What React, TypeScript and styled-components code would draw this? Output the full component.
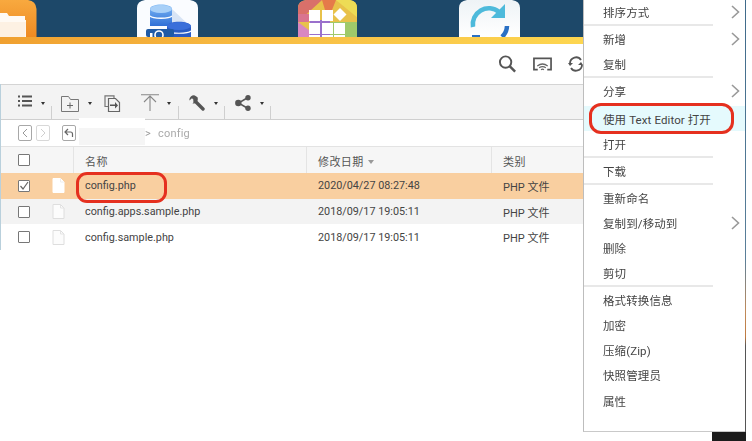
import React from "react";
import styled, { createGlobalStyle } from "styled-components";

const Global = createGlobalStyle`
  html, body { margin: 0; padding: 0; background: #fff; }
  body { font-family: Roboto, "Noto Sans CJK SC", "Liberation Sans", sans-serif; color: #444; overflow: hidden; }
  #root { width: 752px; height: 441px; overflow: hidden; }
`;

const Stage = styled.div`
  position: relative;
  width: 746px;
  height: 441px;
  display: flex;
  align-items: flex-start;
  overflow: hidden;
  filter: blur(0.4px);
`;

const Main = styled.div`
  width: 583px;
  flex: none;
  display: flex;
  flex-direction: column;
  overflow: hidden;
`;

const Dock = styled.div`
  height: 37px;
  position: relative;
  background: #1d4869;
  overflow: hidden;
  display: flex;
`;

const DockSlot = styled.div<{ $w: number; $gap: number }>`
  width: ${(p) => p.$w}px;
  margin-left: ${(p) => p.$gap}px;
  height: 37px;
  flex: none;
`;

const Strip = styled.div`
  height: 7px;
  background: linear-gradient(90deg, #f0a030 0%, #f8bf45 50%, #fdd650 100%);
`;

const ActionBar = styled.div`
  height: 40px;
  display: flex;
  align-items: center;
  padding-left: 498px;
  gap: 16px;
  color: #555;
`;

const Content = styled.div`
  border-left: 1px solid #b9d0dc;
`;

const Toolbar = styled.div`
  height: 34px;
  background: #f3f3f3;
  border-top: 1px solid #d4d4d4;
  border-bottom: 1px solid #cfcfcf;
  position: relative;
`;

const ToolRow = styled.div`
  display: flex;
  align-items: flex-start;
  height: 100%;
`;

const ToolGroup = styled.div<{ $w: number }>`
  width: ${(p) => p.$w}px;
  height: 34px;
  flex: none;
  position: relative;
  display: flex;
  align-items: flex-start;
  &::after {
    content: "";
    position: absolute;
    right: 0;
    top: 21px;
    height: 13px;
    width: 1px;
    background: #cfcfcf;
  }
`;

const ToolIcon = styled.span<{ $pl: number; $pt?: number }>`
  margin-left: ${(p) => p.$pl}px;
  margin-top: ${(p) => p.$pt ?? 8}px;
  display: inline-flex;
  flex: none;
`;

const Caret = styled.span<{ $ml: number }>`
  margin-left: ${(p) => p.$ml}px;
  margin-top: 17px;
  width: 0;
  height: 0;
  border-left: 2.5px solid transparent;
  border-right: 2.5px solid transparent;
  border-top: 3px solid #333;
  flex: none;
`;

const NavRow = styled.div`
  height: 27px;
  border-bottom: 1px solid #e3e3e3;
  display: flex;
  align-items: center;
  padding-left: 17px;
  box-sizing: border-box;
  position: relative;
`;

const NavBtn = styled.span<{ $off?: boolean; $ml?: number }>`
  width: 12px;
  height: 14px;
  border: 1px solid ${(p) => (p.$off ? "#d8d8d8" : "#a8a8a8")};
  border-radius: 2px;
  margin-left: ${(p) => p.$ml ?? 0}px;
  display: inline-flex;
  align-items: center;
  justify-content: center;
  color: ${(p) => (p.$off ? "#cfcfcf" : "#999")};
  flex: none;
  background: #fff;
`;

const Redact = styled.div`
  position: absolute;
  left: 78px;
  top: -2px;
  width: 66px;
  height: 27px;
  background: linear-gradient(#fff 0 10px, #f5f5f5 10px);
`;

const Crumb = styled.span`
  position: absolute;
  left: 144px;
  top: 7px;
  font-size: 11px;
  color: #aaa;
  letter-spacing: 0.2px;
  b { font-weight: 400; margin-right: 7px; color: #999; }
`;

const cols = "72px 233px 185px 1fr";

const Header = styled.div`
  display: grid;
  grid-template-columns: ${cols};
  height: 26px;
  background: #f6f6f6;
  font-size: 11px;
  align-items: center;
  color: #555;
`;

const HeadCell = styled.div<{ $line?: boolean }>`
  height: 26px;
  display: flex;
  align-items: center;
  padding: 2px 0 0 11px;
  box-sizing: border-box;
  border-left: ${(p) => (p.$line ? "1px solid #e4e4e4" : "none")};
  letter-spacing: 0.4px;
`;

const SortMark = styled.i`
  width: 0;
  height: 0;
  margin-left: 4px;
  margin-top: 2px;
  border-left: 3.5px solid transparent;
  border-right: 3.5px solid transparent;
  border-top: 4px solid #999;
`;

const Row = styled.div<{ $bg: string }>`
  display: grid;
  grid-template-columns: ${cols};
  height: 25.7px;
  background: ${(p) => p.$bg};
  font-size: 10.8px;
  align-items: center;
  color: #444;
`;

const Cell = styled.div`
  padding-left: 12px;
  white-space: nowrap;
`;

const TypeCell = styled(Cell)`
  font-size: 11px;
`;

const MarkCell = styled.div`
  display: flex;
  align-items: center;
  gap: 22px;
  padding-left: 17px;
`;

const Check = styled.span`
  width: 10px;
  height: 10px;
  border: 1px solid #777;
  background: #fff;
  display: inline-flex;
  flex: none;
  border-radius: 1px;
`;

const Menu = styled.div`
  width: 161px;
  flex: none;
  height: 431px;
  background: #fff;
  border-left: 1px solid #bdbdbd;
  border-bottom: 1px solid #c9c9c9;
  position: relative;
  &::after {
    content: "";
    position: absolute;
    right: -2px;
    top: 0;
    bottom: -1px;
    width: 2px;
    background: linear-gradient(#3f6a8a 0%, #5a7f99 60%, #c08a5a 72%, #c07a40 78%, #555 80%, #555 100%);
  }
`;

const Item = styled.div<{ $h: number; $hl?: boolean; $mt?: number }>`
  height: ${(p) => p.$h}px;
  margin-top: ${(p) => p.$mt ?? 0}px;
  padding-left: 19px;
  display: flex;
  align-items: center;
  font-size: 11.5px;
  color: #444;
  letter-spacing: 0.1px;
  background: ${(p) => (p.$hl ? "#e5fafd" : "transparent")};
  position: relative;
  white-space: nowrap;
`;

const Chevron = styled.svg`
  position: absolute;
  left: 147px;
  top: 50%;
  transform: translateY(-50%);
  color: #999;
`;

const Sep = styled.div`
  height: 2px;
  width: 129px;
  background: #e8e8e8;
`;

const Corner = styled.div`
  position: absolute;
  right: 0;
  bottom: 0;
  width: 34px;
  height: 9px;
  background: #1c1c1c;
`;

const RedBox = styled.div<{ $x: number; $y: number; $w: number; $h: number; $r: number }>`
  position: absolute;
  left: ${(p) => p.$x}px;
  top: ${(p) => p.$y}px;
  width: ${(p) => p.$w}px;
  height: ${(p) => p.$h}px;
  border: 3px solid #e5301f;
  border-radius: ${(p) => p.$r}px;
  box-sizing: border-box;
`;

const FileIcon = ({ sel }: { sel?: boolean }) => (
  <svg width="13" height="15" viewBox="0 0 13 15" style={{ flex: "none" }}>
    <path d="M1 .5h7.5L12 4v10.5H1z" fill={sel ? "#fff" : "#fcfcfc"} stroke={sel ? "#fff" : "#dedede"} />
    <path d="M8.5 .5V4H12" fill="none" stroke={sel ? "#eee" : "#e4e4e4"} />
  </svg>
);

const Chev = () => (
  <Chevron width="9" height="14" viewBox="0 0 9 14">
    <path d="M1 1l6.5 6L1 13" fill="none" stroke="currentColor" strokeWidth="1.6" />
  </Chevron>
);

type M = { t?: string; h?: number; arrow?: boolean; hl?: boolean; mt?: number; sep?: boolean };
const items: M[] = [
  { t: "排序方式", h: 24, arrow: true },
  { sep: true },
  { t: "新增", h: 25, arrow: true },
  { t: "复制", h: 25 },
  { sep: true },
  { t: "分享", h: 25, arrow: true },
  { t: "使用 Text Editor 打开", h: 25, hl: true, mt: 3 },
  { t: "打开", h: 25 },
  { sep: true },
  { t: "下载", h: 25 },
  { sep: true },
  { t: "重新命名", h: 25 },
  { t: "复制到/移动到", h: 25, arrow: true },
  { t: "删除", h: 25 },
  { t: "剪切", h: 25 },
  { sep: true },
  { t: "格式转换信息", h: 25 },
  { t: "加密", h: 25 },
  { t: "压缩(Zip)", h: 25 },
  { t: "快照管理员", h: 26 },
  { t: "属性", h: 25 },
];

const files = [
  { n: "config.php", d: "2020/04/27 08:27:48", bg: "#f9cfa0", sel: true },
  { n: "config.apps.sample.php", d: "2018/09/17 19:05:11", bg: "#f3f3f3" },
  { n: "config.sample.php", d: "2018/09/17 19:05:11", bg: "#fff" },
];

export default function App() {
  return (
    <>
      <Global />
      <Stage>
        <Main>
          <Dock>
            <DockSlot $w={37} $gap={0}>
              <svg width="37" height="37" viewBox="0 0 37 37">
                <defs>
                  <linearGradient id="fo" x1="0" y1="0" x2="0" y2="1">
                    <stop offset="0" stopColor="#f8a93f" />
                    <stop offset="1" stopColor="#ee8a22" />
                  </linearGradient>
                </defs>
                <path d="M0 0h28q8 1 8.500 9V37H0z" fill="url(#fo)" />
                <path d="M0 13h7l2 3h16v4h-4l5 0v17H0z" fill="#fff" opacity=".95" />
                <path d="M0 22h26l-1 15H0z" fill="#fdf1e3" />
              </svg>
            </DockSlot>
            <DockSlot $w={61} $gap={100}>
              <svg width="61" height="37" viewBox="0 0 61 37">
                <defs>
                  <linearGradient id="cy" x1="0" y1="0" x2="0" y2="1">
                    <stop offset="0" stopColor="#7db8f5" />
                    <stop offset="1" stopColor="#2f6fd6" />
                  </linearGradient>
                </defs>
                <path d="M8 0h45q8 1 8 8V37H0V8q0-7 8-8z" fill="#fafcff" />
                <path d="M13 9c0-6 22-6 22 0v17H13z" fill="url(#cy)" />
                <ellipse cx="24" cy="9" rx="11" ry="4" fill="#a8d0f8" />
                <path d="M13 16c3 3 19 3 22 0" stroke="#fff" strokeWidth="1.5" fill="none" />
                <path d="M35 9l18 17H35z" fill="#d8e4f5" />
                <path d="M30 27c0-7 24-7 24 0v10H30z" fill="#2a5bc4" />
                <ellipse cx="42" cy="26" rx="12" ry="4" fill="#3a6fda" />
                <path d="M30 31c3 3 21 3 24 0" stroke="#fff" strokeWidth="1.2" fill="none" />
                <rect x="9" y="29" width="28" height="8" rx="2" fill="#1f5aa6" />
                <circle cx="22" cy="35" r="4" fill="none" stroke="#fff" strokeWidth="1.6" />
                <rect x="13" y="33" width="2.500" height="4" fill="#fff" />
              </svg>
            </DockSlot>
            <DockSlot $w={60} $gap={100}>
              <svg width="60" height="37" viewBox="0 0 60 37">
                <defs>
                  <clipPath id="tc"><path d="M8 0h44q7 1 7 8V37H0V8q0-7 8-8z" /></clipPath>
                </defs>
                <g clipPath="url(#tc)">
                  <rect width="60" height="37" fill="#e8c24a" />
                  <path d="M0 0h24L0 22z" fill="#d9706a" />
                  <path d="M24 0h14L30 20z" fill="#e57a4a" />
                  <path d="M38 0h22v18z" fill="#eddc55" />
                  <path d="M0 22l20 15H0z" fill="#d987c0" />
                  <path d="M12 20h20v17H12z" fill="#9a70cc" />
                  <path d="M32 22h28v15H32z" fill="#9fc96a" />
                  <path d="M0 14h11v8H0z" fill="#d9748f" />
                </g>
                <g fill="#fff">
                  <rect x="11" y="10" width="11" height="11" />
                  <rect x="24" y="10" width="11" height="11" />
                  <rect x="11" y="23" width="11" height="11" />
                  <rect x="24" y="23" width="11" height="11" />
                  <rect x="36" y="23" width="11" height="11" />
                  <rect x="11" y="35" width="11" height="2" />
                  <rect x="24" y="35" width="11" height="2" />
                  <rect x="36" y="35" width="11" height="2" />
                  <path d="M42 8l6.500 6.500L42 21l-6.500-6.500z" />
                </g>
              </svg>
            </DockSlot>
            <DockSlot $w={61} $gap={101}>
              <svg width="61" height="37" viewBox="0 0 61 37">
                <defs>
                  <linearGradient id="sy" x1="0" y1="0" x2="0" y2="1">
                    <stop offset="0" stopColor="#eef3f6" />
                    <stop offset="1" stopColor="#fff" />
                  </linearGradient>
                </defs>
                <path d="M8 0h45q8 1 8 8V37H0V8q0-7 8-8z" fill="url(#sy)" />
                <path d="M14 27a16 16 0 0 1 26-15" fill="none" stroke="#4dbadb" strokeWidth="4.500" />
                <path d="M47 3v14H33z" fill="#4dbadb" transform="translate(-1 1)" />
                <path d="M48 26a16 16 0 0 1-5 11" fill="none" stroke="#2a70c4" strokeWidth="4.500" />
                <path d="M13 37h8" stroke="#2a70c4" strokeWidth="4" />
              </svg>
            </DockSlot>
          </Dock>
          <Strip />
          <ActionBar>
            <svg width="20" height="20" viewBox="0 0 20 20">
              <circle cx="8" cy="8" r="6" fill="none" stroke="#555" strokeWidth="2" />
              <path d="M12.500 12.500L18 18" stroke="#555" strokeWidth="2.600" />
            </svg>
            <svg width="20" height="14" viewBox="0 0 20 14">
              <path d="M5 13H1V1h18v12h-4" fill="none" stroke="#555" strokeWidth="1.800" />
              <path d="M4.500 9q5.500-4 11 0M6.500 11q3.500-2.400 7 0M8.500 13.200q1.500-1.400 3 0" fill="none" stroke="#666" strokeWidth="1.300" />
            </svg>
            <svg width="15" height="16" viewBox="0 0 15 16" style={{ flex: "none", overflow: "hidden" }}>
              <path d="M2 7a6 6 0 0 1 11-3" fill="none" stroke="#555" strokeWidth="1.800" />
              <path d="M14 9a6 6 0 0 1-11 3" fill="none" stroke="#555" strokeWidth="1.800" />
              <path d="M0 7h5L2 10zM15 9h-5l3-3z" fill="#555" />
            </svg>
          </ActionBar>
          <Content>
            <Toolbar>
              <ToolRow>
                <ToolGroup $w={51}>
                  <ToolIcon $pl={17} $pt={10}>
                    <svg width="14" height="12" viewBox="0 0 14 12">
                      <path d="M0 1.500h2M4 1.500h10M0 6h2M4 6h10M0 10.500h2M4 10.500h10" stroke="#555" strokeWidth="1.800" />
                    </svg>
                  </ToolIcon>
                  <Caret $ml={9} />
                </ToolGroup>
                <ToolGroup $w={127}>
                  <ToolIcon $pl={9} $pt={11}>
                    <svg width="18" height="16" viewBox="0 0 18 16">
                      <path d="M.5 .5h7l2 3h8v12H.5z" fill="none" stroke="#777" />
                      <path d="M9 6.500v6M6 9.500h6" stroke="#666" />
                    </svg>
                  </ToolIcon>
                  <Caret $ml={9} />
                  <ToolIcon $pl={12} $pt={10}>
                    <svg width="17" height="17" viewBox="0 0 17 17">
                      <path d="M10 3V.8H1v10.700h3" fill="none" stroke="#777" strokeWidth="1.200" />
                      <path d="M4.500 3.500h7l4 4v9h-11z" fill="none" stroke="#666" strokeWidth="1.200" />
                      <path d="M6 9.500h5V7l3 3.500-3 3V11H6z" fill="#555" />
                    </svg>
                  </ToolIcon>
                  <ToolIcon $pl={20} $pt={9}>
                    <svg width="18" height="17" viewBox="0 0 18 17">
                      <path d="M0 .8h18M9 2v15M3 8l6-6 6 6" fill="none" stroke="#888" strokeWidth="1.100" />
                    </svg>
                  </ToolIcon>
                  <Caret $ml={8} />
                </ToolGroup>
                <ToolGroup $w={46}>
                  <ToolIcon $pl={10} $pt={10}>
                    <svg width="16" height="16" viewBox="0 0 16 16">
                      <path d="M6 6l8 8" stroke="#555" strokeWidth="3.400" strokeLinecap="round" />
                      <path d="M5.800 .4A4.600 4.600 0 0 0 .4 5.400L3 3.300 5.600 5.900 3.500 8.500a4.600 4.600 0 0 0 5-6.200z" fill="#555" />
                    </svg>
                  </ToolIcon>
                  <Caret $ml={9} />
                </ToolGroup>
                <ToolGroup $w={46}>
                  <ToolIcon $pl={10} $pt={10}>
                    <svg width="16" height="16" viewBox="0 0 16 16">
                      <path d="M13 2.500L3.500 8l9.500 5.500" fill="none" stroke="#555" strokeWidth="1.500" />
                      <circle cx="3.300" cy="8" r="3.200" fill="#555" />
                      <circle cx="13" cy="2.800" r="2.700" fill="#555" />
                      <circle cx="13" cy="13.200" r="2.700" fill="#555" />
                    </svg>
                  </ToolIcon>
                  <Caret $ml={9} />
                </ToolGroup>
              </ToolRow>
            </Toolbar>
            <NavRow>
              <NavBtn>
                <svg width="6" height="10" viewBox="0 0 6 10"><path d="M5 1L1 5l4 4" fill="none" stroke="currentColor" /></svg>
              </NavBtn>
              <NavBtn $off $ml={4}>
                <svg width="6" height="10" viewBox="0 0 6 10"><path d="M1 1l4 4-4 4" fill="none" stroke="currentColor" /></svg>
              </NavBtn>
              <NavBtn $ml={12}>
                <svg width="10" height="10" viewBox="0 0 10 10"><path d="M4 1L1 4l3 3M1 4h5.500q2 0 2 2v3" fill="none" stroke="#666" strokeWidth="1.200" /></svg>
              </NavBtn>
              <Redact />
              <Crumb><b>&gt;</b>config</Crumb>
            </NavRow>
            <Header>
              <MarkCell><Check /></MarkCell>
              <HeadCell $line>名称</HeadCell>
              <HeadCell $line>修改日期<SortMark /></HeadCell>
              <HeadCell $line>类别</HeadCell>
            </Header>
            {files.map((f) => (
              <Row key={f.n} $bg={f.bg}>
                <MarkCell>
                  <Check>
                    {f.sel && (
                      <svg width="10" height="10" viewBox="0 0 10 10">
                        <path d="M1.500 5l2.500 3 5-7" fill="none" stroke="#666" strokeWidth="1.200" />
                      </svg>
                    )}
                  </Check>
                  <FileIcon sel={f.sel} />
                </MarkCell>
                <Cell>{f.n}</Cell>
                <Cell>{f.d}</Cell>
                <TypeCell>PHP 文件</TypeCell>
              </Row>
            ))}
          </Content>
        </Main>
        <Menu>
          {items.map((m, i) =>
            m.sep ? (
              <Sep key={i} />
            ) : (
              <Item key={i} $h={m.h!} $hl={m.hl} $mt={m.mt}>
                {m.t}
                {m.arrow && <Chev />}
              </Item>
            )
          )}
        </Menu>
        <Corner />
        <RedBox $x={76} $y={172} $w={91} $h={31} $r={11} />
        <RedBox $x={589} $y={103} $w={145} $h={31} $r={12} />
      </Stage>
    </>
  );
}
